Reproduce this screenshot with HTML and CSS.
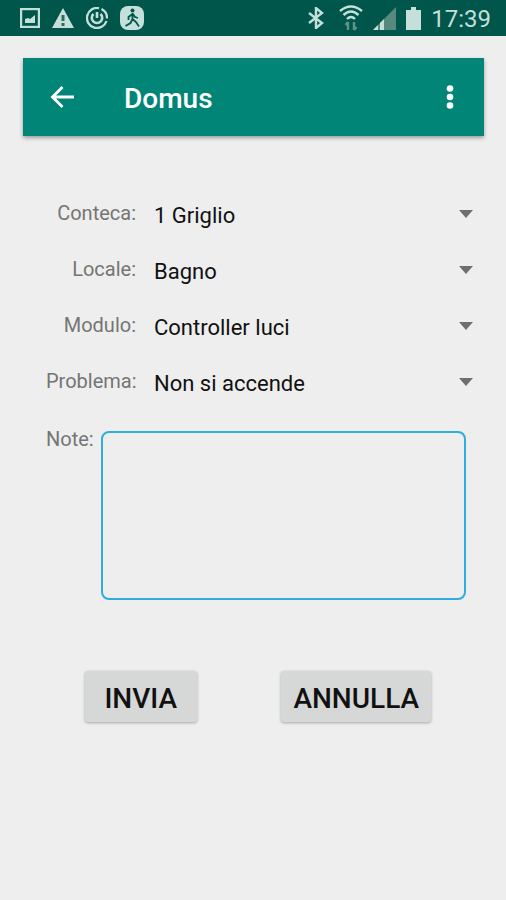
FILE: index.html
```
<!DOCTYPE html>
<html lang="it">
<head>
<meta charset="utf-8">
<meta name="viewport" content="width=device-width, initial-scale=1">
<title>Domus</title>
<link rel="stylesheet" href="styles.css">
</head>
<body>
<div class="status-bar">
  <div class="status-group status-left">
    <svg width="20" height="20" viewBox="0 0 20 20" aria-hidden="true"><rect x="1" y="1" width="18" height="18" fill="none" stroke="currentColor" stroke-width="2.400"/><path d="M5 15V11l3-1 2 1 5-4v8z" fill="currentColor"/></svg>
    <svg width="22" height="20" viewBox="0 0 22 20" aria-hidden="true"><path d="M11 0L22 20H0z" fill="currentColor"/><path d="M11 7v6M11 15v3" stroke="#2d6b60" stroke-width="3"/></svg>
    <svg width="22" height="22" viewBox="0 0 22 22" fill="none" stroke="currentColor" aria-hidden="true"><path d="M13 1.200A10 10 0 1 0 20.500 14M15.500 2A10 10 0 0 1 21 11.500" stroke-width="2.300"/><path d="M7.500 7a5.200 5.200 0 1 0 7 0M11 5v6" stroke-width="2.600"/></svg>
    <svg width="24" height="24" viewBox="0 0 24 24" aria-hidden="true"><rect width="24" height="24" rx="8" fill="currentColor"/><circle cx="12.500" cy="4.500" r="2" fill="#00564a"/><path d="M12.500 7v7M12.500 8l-4 3v3M13 8l2 3 3 1M12.500 13l-2 4-5 3M12.500 13l3.500 3 3 4.500" fill="none" stroke="#00564a" stroke-width="1.800"/></svg>
  </div>
  <div class="status-group status-right">
    <svg width="21" height="22" viewBox="0 0 21 22" fill="none" stroke="currentColor" stroke-width="2.400" aria-hidden="true"><path d="M1 6l13 10-6 5V1l6 5L1 16"/></svg>
    <svg width="24" height="26" viewBox="0 0 24 26" fill="none" stroke="currentColor" stroke-width="2.400" aria-hidden="true"><path d="M1 6q11-9 22 0M4.500 10q7.500-7 15 0M8 14q4-4 8 0"/><path d="M9 25v-8M6.500 20L9 17M15 17v8M17.500 22L15 25" stroke="#5d9389" stroke-width="2.400"/></svg>
    <svg width="23" height="23" viewBox="0 0 23 23" aria-hidden="true"><path d="M23 0v23H0z" fill="#58897f"/><path d="M11 12v11H7v-7zM5 18v5H0z" fill="currentColor"/></svg>
    <svg width="15" height="23" viewBox="0 0 15 23" aria-hidden="true"><path d="M5 0h5v3h5v20H0V3h5z" fill="currentColor"/></svg>
    <time class="clock">17:39</time>
  </div>
</div>
<main class="screen">
  <header class="app-bar">
    <button class="icon-button" type="button" aria-label="Indietro"><svg width="24" height="22" viewBox="0 0 24 22" fill="none" stroke="currentColor" stroke-width="2.800" aria-hidden="true"><path d="M12.500 1L2.500 11l10 10M2.500 11H24"/></svg></button>
    <h1 class="title">Domus</h1>
    <button class="icon-button" type="button" aria-label="Menu"><svg width="8" height="24" viewBox="0 0 8 24" fill="currentColor" aria-hidden="true"><circle cx="4" cy="3.500" r="3.300"/><circle cx="4" cy="12" r="3.300"/><circle cx="4" cy="20.500" r="3.300"/></svg></button>
  </header>
  <form class="report">
    <div class="field">
      <label class="label" for="conteca">Conteca:</label>
      <div class="picker"><select id="conteca"><option>1 Griglio</option></select><svg class="caret" viewBox="0 0 14 8" aria-hidden="true"><path d="M0 0h14L7 8z"/></svg></div>
    </div>
    <div class="field">
      <label class="label" for="locale">Locale:</label>
      <div class="picker"><select id="locale"><option>Bagno</option></select><svg class="caret" viewBox="0 0 14 8" aria-hidden="true"><path d="M0 0h14L7 8z"/></svg></div>
    </div>
    <div class="field">
      <label class="label" for="modulo">Modulo:</label>
      <div class="picker"><select id="modulo"><option>Controller luci</option></select><svg class="caret" viewBox="0 0 14 8" aria-hidden="true"><path d="M0 0h14L7 8z"/></svg></div>
    </div>
    <div class="field">
      <label class="label" for="problema">Problema:</label>
      <div class="picker"><select id="problema"><option>Non si accende</option></select><svg class="caret" viewBox="0 0 14 8" aria-hidden="true"><path d="M0 0h14L7 8z"/></svg></div>
    </div>
    <div class="notes">
      <label class="label" for="note">Note:</label>
      <textarea id="note" rows="6"></textarea>
    </div>
    <div class="actions">
      <button class="action" type="submit">INVIA</button>
      <button class="action" type="reset">ANNULLA</button>
    </div>
  </form>
</main>
</body>
</html>
```
FILE: styles.css
```
* {
  box-sizing: border-box;
}

body {
  margin: 0;
  min-height: 100vh;
  background: #eeeeee;
  color: #111111;
  font-family: Roboto, sans-serif;
}

button,
select,
textarea {
  font-family: inherit;
  color: inherit;
}

svg {
  display: block;
  flex: none;
}

.status-bar {
  display: flex;
  justify-content: space-between;
  height: 36px;
  padding: 0 15px 0 20px;
  background: #00564a;
  color: #c5dfda;
}

.status-group {
  display: flex;
  align-items: center;
}

.status-left {
  gap: 12px;
}

.status-right {
  gap: 10px;
}

.clock {
  padding-top: 3px;
  font-size: 24px;
  line-height: 33px;
}

.screen {
  padding: 22px 22px 0 23px;
}

.app-bar {
  display: flex;
  align-items: center;
  height: 78px;
  padding: 0 20px 0 25px;
  background: #008577;
  color: #ffffff;
  box-shadow: 0 2px 4px rgba(0, 0, 0, 0.35);
}

.icon-button {
  display: flex;
  align-items: center;
  justify-content: center;
  height: 48px;
  min-width: 28px;
  padding: 0 2px;
  border: 0;
  background: none;
  color: inherit;
}

.title {
  flex: 1;
  margin: 0 0 0 48px;
  padding-top: 4px;
  font-size: 28px;
  font-weight: 500;
  line-height: 36px;
}

.report {
  padding-top: 50px;
}

.field {
  display: flex;
  align-items: flex-start;
  gap: 18px;
  height: 56px;
  padding: 0 11px 0 23px;
}

.label {
  color: #757575;
  font-size: 20px;
  line-height: 55px;
}

.field .label {
  width: 90px;
  text-align: right;
}

.picker {
  display: flex;
  flex: 1;
  align-items: center;
  height: 56px;
}

.picker select {
  flex: 1;
  height: 56px;
  margin-right: -14px;
  padding: 3px 14px 0 0;
  border: 0;
  appearance: none;
  background: none;
  font-size: 22px;
}

.caret {
  width: 14px;
  height: 8px;
  fill: #6e6e6e;
  pointer-events: none;
}

.notes {
  display: flex;
  align-items: flex-start;
  gap: 7px;
  padding: 21px 18px 0 23px;
}

.notes .label {
  line-height: 16px;
}

.notes textarea {
  flex: 1;
  min-width: 0;
  height: 169px;
  padding: 8px;
  border: 2px solid #2fadde;
  border-radius: 8px;
  outline: 0;
  background: none;
  font-size: 20px;
  resize: none;
}

.actions {
  display: grid;
  grid-template-columns: 1fr 1fr;
  justify-items: center;
  padding: 71px 20px 0 10px;
}

.action {
  min-width: 112px;
  height: 51px;
  padding: 4px 12px 0;
  border: 0;
  border-radius: 3px;
  background: #d6d8d7;
  box-shadow: 0 1px 3px rgba(0, 0, 0, 0.3);
  font-size: 28px;
  font-weight: 500;
}
```
